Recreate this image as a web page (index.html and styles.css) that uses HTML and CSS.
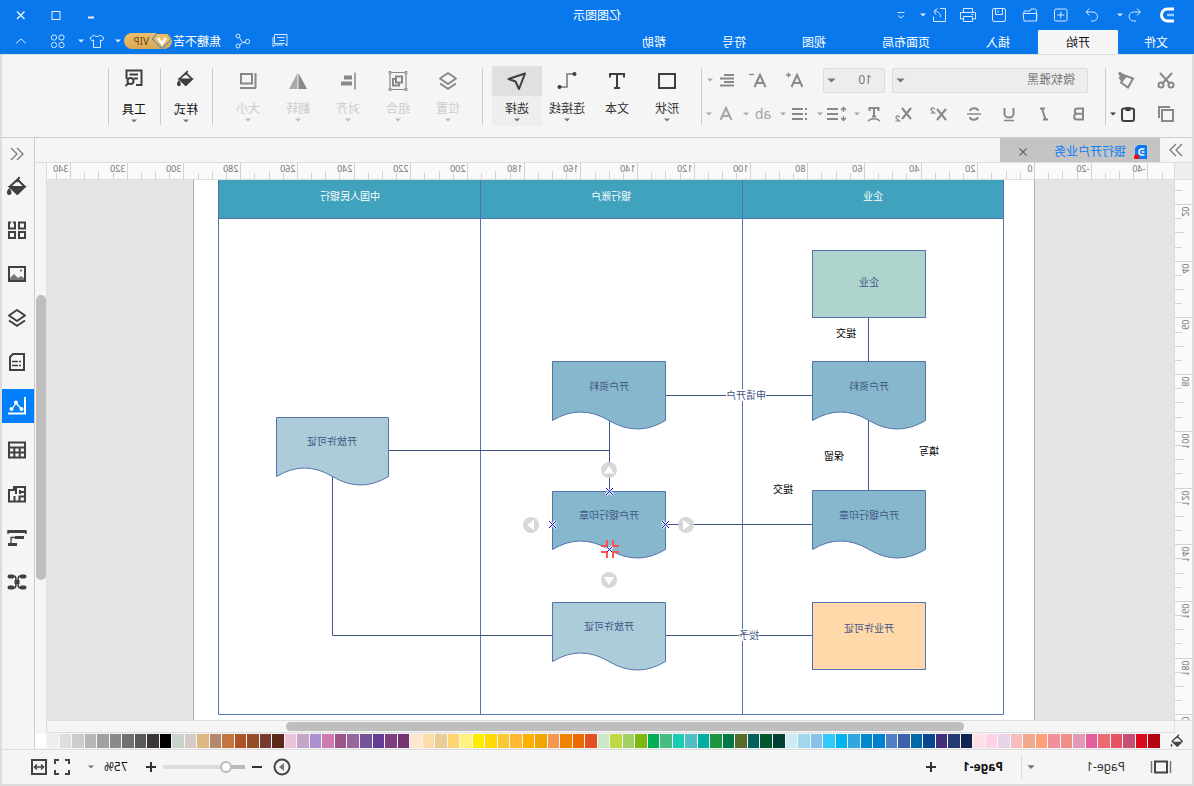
FILE: index.html
```html
<!DOCTYPE html>
<html lang="zh-CN">
<head>
<meta charset="utf-8">
<title>亿图图示</title>
<link rel="stylesheet" href="styles.css">
</head>
<body>
<svg class="defs" aria-hidden="true">
  <symbol id="bucket" viewBox="0 0 20 20"><path d="M9.500 3.500 17 10.500 9.500 17.500 2.500 10.500Z" fill="none" stroke="currentColor" stroke-width="2" stroke-linejoin="round"/><path d="M2.500 11h14.500l-7.200 6.800Z" fill="currentColor"/><path d="M7.500 1l3 5" stroke="currentColor" stroke-width="2"/><path d="M17.800 13.500c2 2.500 1.500 4.500 0 4.500s-2-2 0-4.500Z" fill="currentColor"/></symbol>
  <symbol id="layers" viewBox="0 0 20 20"><path d="M10 2 18 7.500 10 13 2 7.500Z" fill="none" stroke="currentColor" stroke-width="2" stroke-linejoin="round"/><path d="M2 12.500 10 17.800l8-5.300" fill="none" stroke="currentColor" stroke-width="2"/></symbol>
  <symbol id="caret" viewBox="0 0 8 8"><path d="M1 2.500h6L4 5.500Z" fill="currentColor"/></symbol>
  <symbol id="more" viewBox="0 0 16 16"><path d="M2 2l6 6-6 6M8 2l6 6-6 6" fill="none" stroke="currentColor" stroke-width="1.300"/></symbol>
</svg>
<div class="app">
  <header class="titlebar">
    <div class="title-row">
      <div class="quick">
        <svg class="logo" viewBox="0 0 16 16"><path d="M1 2h6.500a6 6 0 0 1 0 12H1" fill="none" stroke="#fff" stroke-width="3"/><path d="M1 8h7" stroke="#9fcbff" stroke-width="2.400"/></svg>
        <button class="q q-first" aria-label="撤销"><svg class="ic" viewBox="0 0 16 16"><path d="M6 1.500 2.500 5 6 8.500M3 5h6.500a4.500 4.500 0 0 1 0 9H7" /></svg></button><svg class="caret"><use href="#caret"/></svg>
        <button class="q q-redo" aria-label="重做"><svg class="ic" viewBox="0 0 16 16"><path d="M10.500 1.500 14 5l-3.500 3.500M13.500 5H7a4.500 4.500 0 0 0 0 9h2"/></svg></button>
        <button class="q" aria-label="新建"><svg class="ic" viewBox="0 0 16 16"><rect x="2" y="2" width="12.500" height="12" rx="1.500"/><path d="M8.200 4.500v7M4.700 8h7"/></svg></button>
        <button class="q" aria-label="打开"><svg class="ic" viewBox="0 0 16 16"><path d="M1.500 14V3.500l1-1.500H7l1 2h6v2.500M1.500 14l-.500-7.500h14L14 14Z"/></svg></button>
        <button class="q" aria-label="保存"><svg class="ic" viewBox="0 0 16 16"><rect x="1.500" y="1.500" width="13" height="13" rx="1.500"/><path d="M4.500 1.500v6h7v-6M9 3.500v2"/></svg></button>
        <button class="q" aria-label="打印"><svg class="ic" viewBox="0 0 16 16"><path d="M3.500 5.500V1.500h9v4M3.500 12H.500V5.500h15V12h-3"/><path d="M3.500 9.500h9v5h-9ZM2.500 7.500h2"/></svg></button>
        <button class="q q-narrow" aria-label="导出"><svg class="ic" viewBox="0 0 16 16"><path d="M8 1.500H2.500v13h12v-5"/><path d="M7.500 10c0-4 3-6 6-6M10.500 1.500 14 4l-2 3.500"/></svg></button><svg class="caret"><use href="#caret"/></svg>
        <button class="q q-custom" aria-label="自定义"><svg class="ic" viewBox="0 0 16 16"><path d="M4.500 5.500h7M5 8.500 8 11l3-2.500"/></svg></button>
      </div>
      <h1 class="title">亿图图示</h1>
      <div class="window-buttons">
        <button aria-label="最小化"><svg class="ic" viewBox="0 0 16 16"><path d="M5 10.500h6" stroke-width="2"/></svg></button>
        <button aria-label="最大化"><svg class="ic" viewBox="0 0 16 16"><rect x="4" y="4.500" width="8" height="8"/></svg></button>
        <button aria-label="关闭"><svg class="ic" viewBox="0 0 16 16"><path d="M4.500 4.500l7.500 7.500M12 4.500 4.500 12" stroke-width="1.400"/></svg></button>
      </div>
    </div>
    <div class="tab-row">
      <nav class="tabs">
        <button class="tab file">文件</button><button class="tab active">开始</button><button class="tab">插入</button><button class="tab">页面布局</button><button class="tab">视图</button><button class="tab">符号</button><button class="tab">帮助</button>
      </nav>
      <div class="account">
        <button class="a-msg" aria-label="消息"><svg class="ic" viewBox="0 0 16 16"><path d="M1 1.500h12.500v9H3.500L1 13ZM3.500 4.500h7.500M3.500 7.500h5M15 4v9.500l-2-1.500H5"/></svg></button>
        <button class="a-share" aria-label="分享"><svg class="ic" viewBox="0 0 16 16"><circle cx="3.500" cy="8.500" r="2.200"/><circle cx="13" cy="3" r="2"/><circle cx="13" cy="13" r="2"/><path d="M5.500 9.500c3 .500 4-1 5.800-4.800M5.500 9c2.500 0 4 1.500 5.800 3"/></svg></button>
        <span class="user">焦糖不苦</span>
        <span class="vip"><svg class="gem" viewBox="0 0 20 16"><path d="M4.500.500h11L19.500 6 10 15.500.500 6Z" fill="#eebc66" stroke="#0a78ed"/><path d="M6 5l4 5.500L14 5" fill="none" stroke="#fff" stroke-width="2.500"/></svg>VIP</span>
        <svg class="caret c-user"><use href="#caret"/></svg>
        <button class="a-shirt" aria-label="主题"><svg class="ic" viewBox="0 0 16 16"><path d="M5 2c1 2 5 2 6 0l4 3-2 3-1.500-1v7.500h-7V7L3 8 1 5Z"/></svg></button>
        <svg class="caret c-shirt"><use href="#caret"/></svg>
        <button class="a-apps" aria-label="应用"><svg class="ic" viewBox="0 0 16 16"><rect x="2" y="2" width="5" height="5" rx="2"/><rect x="9.500" y="2" width="5" height="5" rx="2"/><rect x="2" y="9.500" width="5" height="5" rx="2"/><rect x="9.500" y="9.500" width="5" height="5" rx="2"/></svg></button>
        <button class="a-fold" aria-label="折叠"><svg class="ic" viewBox="0 0 16 16"><path d="M3 10.500 8 6l5 4.500"/></svg></button>
      </div>
    </div>
  </header>

  <section class="ribbon">
    <div class="clip">
      <button aria-label="剪切"><svg class="gi" viewBox="0 0 20 20"><path d="M4 3l10 11M16 3 6 14"/><circle cx="5" cy="15" r="2.500"/><circle cx="15" cy="15" r="2.500"/></svg></button>
      <button aria-label="格式刷"><svg class="gi" viewBox="0 0 20 20"><path d="M3 8.500 10 6l5 6.500-7 5Z"/><path d="M9.500 5.500 14 3l3.500 5-3 3.500Z" fill="currentColor" stroke="none"/><path d="M14 6l3-3.500" stroke-width="3"/></svg></button>
      <button aria-label="复制"><svg class="gi" viewBox="0 0 20 20"><rect x="6" y="6" width="11" height="11" transform="translate(-3 0)"/><path d="M6 3h11v11"/></svg></button>
      <div class="pair dark"><button aria-label="粘贴"><svg class="gi" viewBox="0 0 20 20"><rect x="4" y="4.500" width="12" height="12.500" rx="2"/><path d="M7.500 5h5" stroke-width="4"/></svg></button><svg class="caret"><use href="#caret"/></svg></div>
    </div>
    <i class="sep"></i>
    <div class="font">
      <div class="font-row">
        <span class="pick family"><select aria-label="字体"><option>微软雅黑</option></select><svg class="caret"><use href="#caret"/></svg></span>
        <span class="pick size"><select aria-label="字号"><option>10</option></select><svg class="caret"><use href="#caret"/></svg></span>
        <button class="w36 push" aria-label="增大字号"><svg class="gi" viewBox="0 0 20 20"><path d="M2.500 17 8 5l5.500 12M4.500 13h7"/><path d="M14 5h5M16.500 2.500v5" stroke-width="1.300"/></svg></button>
        <button class="w36" aria-label="减小字号"><svg class="gi" viewBox="0 0 20 20"><path d="M2.500 17 8 5l5.500 12M4.500 13h7"/><path d="M14 4.500h5" stroke-width="1.300"/></svg></button>
        <button class="w26" aria-label="对齐"><svg class="gi" viewBox="0 0 20 20"><path d="M3 5h10M3 8.500h14M3 12h10M3 15.500h14"/></svg></button><svg class="caret"><use href="#caret"/></svg>
      </div>
      <div class="font-row second">
        <button class="w35" aria-label="粗体"><svg class="gi" viewBox="0 0 20 20"><path d="M6 4.500h5.500a2.500 2.500 0 0 1 0 5.300H6ZM6 9.800h6a2.800 2.800 0 0 1 0 5.700H6Z"/></svg></button>
        <button class="w35" aria-label="斜体"><svg class="gi" viewBox="0 0 20 20"><path d="M9 4.500h5M6 15.500h5M12 4.500 8.500 15.500"/></svg></button>
        <button class="w35" aria-label="下划线"><svg class="gi" viewBox="0 0 20 20"><path d="M5.500 4v6a4.500 3.500 0 0 0 9 0V4"/><path d="M5 16.500h10" stroke-width="1.500"/></svg></button>
        <button class="w35" aria-label="删除线"><svg class="gi" viewBox="0 0 20 20"><path d="M3 10h14" stroke-width="1.500"/><path d="M14 7c-1-4-8-3.500-8 0M6 13c1 4 8 3.500 8 0"/></svg></button>
        <button class="w35" aria-label="上标"><svg class="gi" viewBox="0 0 20 20"><path d="M3 5l9 11M12 5 3 16"/><path d="M14.500 5.500c0-2.500 4-2 3.500.500L14.500 9h4" stroke-width="1.200"/></svg></button>
        <button class="w35" aria-label="下标"><svg class="gi" viewBox="0 0 20 20"><path d="M3 4l9 11M12 4 3 15"/><path d="M14.500 13.500c0-2.500 4-2 3.500.500l-3.500 3h4" stroke-width="1.200"/></svg></button>
        <button class="w26" aria-label="文字方向"><svg class="gi" viewBox="0 0 20 20"><path d="M5.500 7V4h9v3M10 4v9M8 12.500h4"/><path d="M4 17c3-3 9-3 12 0" stroke-width="1.500"/></svg></button><svg class="caret"><use href="#caret"/></svg>
        <button class="w26" aria-label="行距"><svg class="gi" viewBox="0 0 20 20"><path d="M9 5h11M9 10h11M9 15h11"/><path d="M3.500 3v5M3.500 12v5M1 6l2.500-2.500L6 6M1 14l2.500 2.500L6 14" stroke-width="1.500"/></svg></button><svg class="caret"><use href="#caret"/></svg>
        <button class="w26" aria-label="列表"><svg class="gi" viewBox="0 0 20 20"><path d="M3 5h2M3 10h2M3 15h2M7 5h11M7 10h11M7 15h11"/></svg></button><svg class="caret"><use href="#caret"/></svg>
        <button class="w26 letter faint">ab</button><svg class="caret"><use href="#caret"/></svg>
        <button class="w26 faint" aria-label="字体颜色"><svg class="gi" viewBox="0 0 20 20"><path d="M4.500 16 10 4l5.500 12M6.500 12h7"/></svg></button><svg class="caret"><use href="#caret"/></svg>
      </div>
    </div>
    <i class="sep"></i>
    <div class="tools dark">
      <button class="big"><span class="pic"><svg class="gi" viewBox="0 0 20 20"><rect x="2" y="3" width="16" height="14"/></svg></span><span>形状</span><svg class="caret"><use href="#caret"/></svg></button>
      <button class="big"><span class="pic"><svg class="gi" viewBox="0 0 20 20"><path d="M3 6.500V3h14v3.500M10 3v14M7 17h6"/></svg></span><span>文本</span></button>
      <button class="big"><span class="pic"><svg class="gi" viewBox="0 0 20 20"><path d="M3 3h7v13h7" stroke="#777" stroke-width="1.500"/><circle cx="2.500" cy="3" r="2" fill="currentColor" stroke="none"/><circle cx="17.500" cy="16" r="2" fill="currentColor" stroke="none"/></svg></span><span>连接线</span><svg class="caret"><use href="#caret"/></svg></button>
      <button class="big selected"><span class="pic"><svg class="gi" viewBox="0 0 20 20"><path d="M2 2.500 18.500 8 11.500 10.500 8 18Z" stroke-linejoin="round"/></svg></span><span>选择</span><svg class="caret"><use href="#caret"/></svg></button>
    </div>
    <i class="sep"></i>
    <div class="tools disabled">
      <button class="big"><span class="pic"><svg class="gi"><use href="#layers"/></svg></span><span>位置</span><svg class="caret"><use href="#caret"/></svg></button>
      <button class="big"><span class="pic"><svg class="gi" viewBox="0 0 20 20"><path d="M2 1.500h16v17H2Z" stroke-width="1.200"/><path d="M6 5.500h6v6H6ZM9 12v2.500h6V8h-2"/><path d="M1 .500h2v2H1ZM17 .500h2v2h-2ZM1 17.500h2v2H1ZM17 17.500h2v2h-2Z" fill="#f5f5f5" stroke-width="1"/></svg></span><span>组合</span><svg class="caret"><use href="#caret"/></svg></button>
      <button class="big"><span class="pic"><svg class="gi" viewBox="0 0 20 20"><path d="M3 1.500v17" stroke-width="1.500"/><path d="M6 6.500h8M6 12.500h11" stroke-width="4"/></svg></span><span>对齐</span><svg class="caret"><use href="#caret"/></svg></button>
      <button class="big"><span class="pic"><svg class="gi" viewBox="0 0 20 20"><path d="M9.500 2v16H1Z" fill="currentColor" stroke="none"/><path d="M10.500 2v16h8.500Z" fill="#aaa" stroke="none"/></svg></span><span>翻转</span><svg class="caret"><use href="#caret"/></svg></button>
      <button class="big"><span class="pic"><svg class="gi" viewBox="0 0 20 20"><rect x="6" y="3" width="11" height="9.500"/><path d="M2.500 2v15M2 17h16"/></svg></span><span>大小</span><svg class="caret"><use href="#caret"/></svg></button>
    </div>
    <i class="sep"></i>
    <div class="tools dark tall"><button class="big"><span class="pic"><svg class="gi sm"><use href="#bucket"/></svg></span><span>样式</span><svg class="caret"><use href="#caret"/></svg></button></div>
    <i class="sep"></i>
    <div class="tools dark tall"><button class="big"><span class="pic"><svg class="gi" viewBox="0 0 20 20"><path d="M8 17H2.500V2.500h15V11M6 6.500h8.500M6 10.500h4"/><circle cx="13.500" cy="13" r="3"/><path d="M15.500 15l3 3"/></svg></span><span>工具</span><svg class="caret"><use href="#caret"/></svg></button></div>
    <i class="sep"></i>
  </section>

  <div class="work">
    <main class="main">
      <div class="docs">
        <button class="expand" aria-label="展开"><svg class="more"><use href="#more"/></svg></button>
        <div class="doc">
          <svg class="doc-icon" viewBox="0 0 14 14"><path d="M2 0h8l3 3v11H1V1Z" fill="#0a78f5"/><path d="M3.500 4H6a3 3 0 0 1 0 6H3.500M3.500 7h3" fill="none" stroke="#fff" stroke-width="1.500"/><circle cx="11.500" cy="12" r="2.500" fill="#f00"/></svg>
          <span class="doc-name">银行开户业务</span>
          <button aria-label="关闭标签"><svg class="x" viewBox="0 0 10 10"><path d="M1.500 1.500l7 7M8.500 1.500l-7 7" stroke="#666" stroke-width="1.200"/></svg></button>
        </div>
      </div>
      <div class="board">
        <div class="corner"></div>
        <svg class="ruler-x" id="ruler-x"></svg>
        <div class="track-y"><div class="thumb-y"></div></div>
        <svg class="ruler-y" id="ruler-y"></svg>
        <svg class="canvas">
          <g transform="translate(-20 -180)">
            <rect x="159.500" y="170" width="841" height="560" fill="#fff" stroke="#b0b0b0"/>
            <rect x="190.500" y="160" width="785" height="58.500" fill="#40a2bd"/>
            <g fill="none" stroke="#5473ad"><path d="M190.500 160v554.500h785V160M190.500 218.500h785M451.500 180v534M713.500 180v534"/></g>
            <g class="links"><path d="M325.500 318v43M325.500 420v71M382 395.500h146M584.500 420v72M584.500 450.500H805M382 524.500h146M382 635.500h146M642 635.500h219.500V476"/></g>
            <g class="shapes">
              <rect x="268.500" y="250.500" width="113" height="67" fill="#aed3cc"/>
              <rect x="268.500" y="602.500" width="113" height="67" fill="#ffd9aa"/>
              <path d="M268.500 361.500h113v59q-28-17-56.500 0t-56.500 0Z" fill="#87b7cc"/>
              <path d="M268.500 490.500h113v59q-28-17-56.500 0t-56.500 0Z" fill="#87b7cc"/>
              <path d="M528.500 361.500h113v59q-28-17-56.500 0t-56.500 0Z" fill="#87b7cc"/>
              <path d="M528.500 491.500h113v58q-28-17-56.500 0t-56.500 0Z" fill="#87b7cc"/>
              <path d="M528.500 602.500h113v59q-28-17-56.500 0t-56.500 0Z" fill="#adccda"/>
              <path d="M805.500 417.500h112v59q-28-17-56 0t-56 0Z" fill="#adccda"/>
            </g>
            <path d="M428 389h40v12h-40ZM435 629h20v12h-20Z" fill="#fff"/>
            <g class="t head"><text x="321" y="200">企业</text><text x="583" y="200">银行账户</text><text x="844" y="200">中国人民银行</text></g>
            <g class="t"><text x="325" y="286">企业</text><text x="325" y="390">开户资料</text><text x="325" y="519">开户银行印章</text><text x="325" y="632">开业许可证</text><text x="585" y="390">开户资料</text><text x="585" y="519">开户银行印章</text><text x="585" y="630">开放许可证</text><text x="862" y="445">开放许可证</text><text x="448" y="399">申请开户</text><text x="445" y="639">授予</text></g>
            <g class="t black"><text x="348" y="337">提交</text><text x="265" y="455">填写</text><text x="360" y="460">保留</text><text x="411" y="493">提交</text></g>
            <g fill="#d4d4d4" fill-opacity=".9"><circle cx="585" cy="470" r="8"/><circle cx="508" cy="525" r="8"/><circle cx="663" cy="525" r="8"/><circle cx="585" cy="580" r="8"/></g>
            <path d="M580 473.500h10l-5-8ZM511 520v10l-7-5ZM660 520v10l7-5ZM580 577h10l-5 8Z" fill="#fff"/>
            <g stroke="#fff" stroke-opacity=".8" stroke-width="3"><path d="M581 488l7 7M588 488l-7 7M525 521l7 7M532 521l-7 7M638 521l7 7M645 521l-7 7M581 546l7 7M588 546l-7 7"/></g>
            <path d="M587 540v6h6M581 540v6h-6M575 552h6v6M593 552h-6v6" fill="none" stroke="#ff4f4f" stroke-width="2"/>
            <path d="M581 488l7 7M588 488l-7 7M638 521l7 7M645 521l-7 7M525 521l7 7M532 521l-7 7M582 547l5 5M587 547l-5 5" stroke="#1212d8"/>
          </g>
        </svg>
        <div class="foot-corner"></div>
        <div class="track-x"><div class="thumb-x"></div></div>
      </div>
      <div class="palette">
        <button class="fill" aria-label="填充"><svg class="fill-icon"><use href="#bucket"/></svg></button>
        <div class="swatches" id="swatches"></div>
      </div>
    </main>
    <aside class="side">
      <button class="side-fold" aria-label="收起"><svg class="more back"><use href="#more"/></svg></button>
      <button aria-label="填充"><svg class="gi"><use href="#bucket"/></svg></button>
      <button aria-label="符号库"><svg class="gi" viewBox="0 0 20 20"><path d="M2 2.500h6v6H2ZM12 2.500h6v6h-6ZM2 12h6v6H2ZM12 12h6v6h-6Z"/><path d="M14 1.500h2v3h-2" fill="#f5f5f5" stroke="none"/></svg></button>
      <button aria-label="图片"><svg class="gi" viewBox="0 0 20 20"><rect x="2" y="3" width="16" height="14"/><path d="M3 16v-2l3-2 3 2 4-4 4 4v2Z" fill="#777" stroke="none"/><path d="M5 6.500h2" stroke="#777"/></svg></button>
      <button aria-label="图层"><svg class="gi"><use href="#layers"/></svg></button>
      <button aria-label="页面"><svg class="gi" viewBox="0 0 20 20"><path d="M3 2h11l3 3v13H3Z"/><path d="M6 9.500h2M9 9.500h6M6 13.500h2M9 13.500h6" stroke-width="1.500"/></svg></button>
      <button class="on" aria-label="图表"><svg class="gi" viewBox="0 0 20 20"><path d="M2 1v16.500h17"/><path d="M5.500 13 11 7l4 6" stroke-width="1.300"/><circle cx="5.500" cy="13" r="2" fill="currentColor" stroke="none"/><circle cx="11" cy="6.500" r="2" fill="currentColor" stroke="none"/><circle cx="15.500" cy="13" r="2" fill="currentColor" stroke="none"/></svg></button>
      <button aria-label="表格"><svg class="gi" viewBox="0 0 20 20"><rect x="2" y="2.500" width="16" height="15"/><path d="M2 7.500h16M2 12.500h16M7.300 7.500v10M12.700 7.500v10"/></svg></button>
      <button aria-label="户型"><svg class="gi" viewBox="0 0 20 20"><path d="M2 3h11v3h5v11.500H2ZM2 8h5M2 12.500h5.500v5M11 3v7M12.500 12v5.500M7 6v4"/></svg></button>
      <button aria-label="甘特图"><svg class="gi" viewBox="0 0 20 20"><path d="M1 6V3h18v3" stroke-width="1.500"/><path d="M1 3.500h18M3 9.500h9M10 16.500h9" stroke-width="3"/><path d="M11 9.500h5v6" stroke-width="1.300"/></svg></button>
      <button aria-label="思维导图"><svg class="gi" viewBox="0 0 20 20"><path d="M5 4h2c2 0 2 2 2 6s0 6-2 6H5M15 4h-2c-2 0-2 2-2 6s0 6 2 6h2" stroke-width="1.500"/><path d="M2.500 4.500h3M14.500 4.500h3M2.500 15.500h3M14.500 15.500h3" stroke-width="4" stroke-linecap="round"/><path d="M7.500 10h5" stroke-width="4"/></svg></button>
    </aside>
  </div>

  <footer class="status">
    <button class="pages" aria-label="页面视图"><svg viewBox="0 0 22 14"><path d="M1.500 1v12M20.500 1v12" stroke="#777" stroke-width="1.500"/><rect x="5" y="1.500" width="12" height="11" fill="none" stroke="#444" stroke-width="2"/></svg></button>
    <button class="page-pick"><span>Page-1</span><svg class="caret"><use href="#caret"/></svg></button>
    <button class="page-tab">Page-1</button>
    <button class="add" aria-label="添加页面"><svg viewBox="0 0 12 12"><path d="M1 6h10M6 1v10" stroke="#333" stroke-width="2"/></svg></button>
    <div class="zoom">
      <button class="z-play" aria-label="播放"><svg viewBox="0 0 18 18"><circle cx="9" cy="9" r="7.500" fill="none" stroke="#444" stroke-width="2"/><path d="M7 5l5 4-5 4Z" fill="#777"/></svg></button>
      <button class="z-btn" aria-label="缩小"><svg viewBox="0 0 12 12"><path d="M1 6h10" stroke="#333" stroke-width="2"/></svg></button>
      <input type="range" min="0" max="100" value="18" aria-label="缩放">
      <button class="z-btn z-plus" aria-label="放大"><svg viewBox="0 0 12 12"><path d="M1 6h10M6 1v10" stroke="#333" stroke-width="2"/></svg></button>
      <button class="percent"><span>75%</span><svg class="caret"><use href="#caret"/></svg></button>
      <button class="z-fit" aria-label="全屏"><svg viewBox="0 0 18 18"><path d="M2 6V2h4M12 2h4v4M16 12v4h-4M6 16H2v-4" fill="none" stroke="#444" stroke-width="2"/></svg></button>
      <button class="z-fit" aria-label="适应宽度"><svg viewBox="0 0 18 18"><rect x="2" y="2" width="14" height="14" fill="none" stroke="#444" stroke-width="2"/><path d="M4.500 9h9M7 6.500 4.500 9 7 11.500M11 6.500 13.500 9 11 11.500" fill="none" stroke="#444" stroke-width="1.500"/></svg></button>
    </div>
  </footer>
</div>
<script src="app.js"></script>
</body>
</html>
```

FILE: styles.css
```css
* { box-sizing: border-box; }
body { margin: 0; background: #ddd; font: 12px/16px "Noto Sans", "Noto Sans CJK SC", sans-serif; color: #111; }
button { border: 0; padding: 0; margin: 0; background: none; color: inherit; font: inherit; display: flex; align-items: center; justify-content: center; }
svg { display: block; flex: none; }
.defs { position: absolute; width: 0; height: 0; }

/* The whole window is shown as a mirror image. */
.app { display: flex; flex-direction: column; height: 100vh; overflow: hidden; transform: scaleX(-1); }

.titlebar { background: #0a78ed; color: #fff; }
.title-row { display: grid; grid-template-columns: 1fr auto 1fr; align-items: center; height: 30px; }
.quick { display: flex; align-items: center; color: #d6e9ff; }
.logo { width: 16px; height: 16px; margin: 0 13px 0 19px; }
.ic { width: 16px; height: 16px; fill: none; stroke: currentColor; stroke-width: 1; }
.caret { width: 8px; height: 8px; }
.q { width: 31px; height: 28px; }
.q-first { width: 22px; }
.q-redo { margin-left: 8px; }
.q-narrow { width: 26px; }
.q-custom { width: 20px; margin-left: 8px; }
.title { margin: 0; padding-top: 2px; font-size: 12px; line-height: 16px; font-weight: 400; }
.window-buttons { display: flex; justify-content: flex-end; gap: 5px; padding-right: 6px; color: #e8f2ff; }
.window-buttons button { width: 30px; height: 28px; }
.tab-row { display: flex; justify-content: space-between; height: 24px; }
.tabs { display: flex; }
.tab { padding: 2px 28px 0; height: 24px; white-space: nowrap; }
.tab.file { padding: 2px 26px 0; }
.tab.active { background: #f5f5f5; color: #111; border-radius: 1px 1px 0 0; }
.account { display: flex; align-items: center; height: 22px; padding-right: 6px; color: #d6e9ff; }
.a-msg { width: 20px; margin-right: 17px; }
.a-share { width: 20px; margin-right: 12px; }
.user { color: #fff; margin-right: 1px; padding-top: 1px; }
.vip { display: flex; align-items: center; width: 48px; height: 16px; margin-right: 2px; border-radius: 8px; background: linear-gradient(#edc06d, #d9a853); color: #6b4511; font-size: 10px; }
.gem { width: 20px; height: 16px; margin-right: 3px; }
.c-user { margin-right: 7px; }
.a-shirt { width: 20px; margin-right: 2px; }
.c-shirt { margin-right: 4px; }
.a-apps { width: 30px; margin-right: 7px; }
.a-fold { width: 30px; }

.ribbon { display: flex; align-items: center; height: 84px; background: #f5f5f5; border: solid #ddd; border-width: 1px 2px; border-bottom-color: #ccc; color: #888; }
.sep { width: 1px; height: 57px; background: #ccc; flex: none; }
.gi { width: 20px; height: 20px; fill: none; stroke: currentColor; stroke-width: 2; }
.gi.sm { width: 17px; height: 17px; }
.dark { color: #3f3f3f; }
.clip { display: grid; grid-template-columns: 40px 40px; grid-template-rows: 34px 34px; margin: 2px 0 0 6px; }
.pair { display: flex; align-items: center; padding-left: 8px; gap: 1px; }
.font { width: 403px; margin-top: 2px; padding-left: 8px; }
.font-row { display: flex; align-items: center; height: 34px; padding-left: 9px; }
.font-row.second { padding-left: 0; }
.font-row .caret { margin-right: 3px; color: #aaa; }
.pick { position: relative; margin-right: 7px; }
.pick select { display: block; appearance: none; width: 100%; height: 25px; border: 1px solid #dcdcdf; border-radius: 2px; background: #ededed; color: #777; font: inherit; padding: 0 12px; }
.pick .caret { position: absolute; right: 3px; top: 7px; width: 11px; height: 11px; margin: 0; color: #777; }
.family { width: 196px; }
.size { width: 62px; }
.push { margin-left: 2px; }
.w36 { width: 37px; }
.w35 { width: 35px; }
.w26 { width: 26px; }
.faint { color: #a5a5a5; }
.letter { font-size: 14px; line-height: 20px; }
.tools { display: flex; margin: 0 9px; }
.big { width: 50px; height: 60px; flex-direction: column; justify-content: flex-start; color: #333; white-space: nowrap; }
.pic { display: flex; align-items: center; justify-content: center; width: 50px; height: 30px; margin-bottom: 5px; color: #3f3f3f; }
.big .caret { color: #777; margin-top: -1px; }
.selected { background: #eee; }
.selected .pic { background: #e0e0e0; }
.disabled { margin-right: 10px; }
.disabled .big { color: #ccc; }
.disabled .pic { color: #888; }
.disabled .caret { color: #bbb; }
.tall { margin: 0 0 0 1px; }
.tall .pic { height: 24px; margin-bottom: 12px; }
.tall .big { color: #111; }

.work { display: flex; flex: 1; min-height: 0; border: solid #ddd; border-width: 0 2px; background: #f5f5f5; }
.main { display: flex; flex-direction: column; flex: 1; min-width: 0; }
.docs { display: flex; height: 24px; }
.expand { width: 32px; }
.more { width: 16px; height: 16px; color: #777; }
.back { transform: rotate(180deg); }
.doc { display: flex; align-items: center; width: 160px; padding: 3px 18px 0 12px; background: #c4c4c4; color: #0a7cf5; }
.doc-icon { width: 14px; height: 14px; margin-right: 8px; }
.doc-name { flex: 1; }
.x { width: 10px; height: 10px; }
.board { display: grid; grid-template-columns: 18px minmax(0, 1fr) 12px; grid-template-rows: 18px minmax(0, 1fr) 13px; flex: 1; min-height: 0; }
.corner { background: #eee; border: solid #ddd; border-width: 1px 1px 1px 0; }
.ruler-x { width: 100%; height: 18px; background: #fafafa; border: solid #ddd; border-width: 1px 0; }
.ruler-y { width: 18px; height: 100%; background: #fafafa; border-right: 1px solid #ddd; }
.ruler-x text, .ruler-y text { font-size: 9px; fill: #777; }
.ruler-x path, .ruler-y path { stroke: #d2d2d2; }
.canvas { width: 100%; height: 100%; background: #e5e5e5; }
.track-y { grid-column: 3; grid-row: 1 / 4; border: solid #ddd; border-width: 1px 0 0 1px; padding: 132px 0 0; }
.thumb-y { width: 10px; height: 285px; border-radius: 5px; background: #bebebe; }
.foot-corner { border-right: 1px solid #ddd; border-top: 1px solid #ddd; }
.track-x { border: solid #ddd; border-width: 1px 0; padding: 1px 239px 0 210px; }
.thumb-x { height: 9px; border-radius: 5px; background: #bebebe; }
.links { fill: none; stroke: #3f5684; }
.shapes { stroke: #5473ad; }
.t { font-size: 10px; text-anchor: middle; fill: #3f5684; }
.head { fill: #fff; }
.black { fill: #000; }
.palette { display: flex; height: 16px; padding: 1px 0; }
.fill { width: 32px; padding-right: 2px; color: #444; }
.fill-icon { width: 14px; height: 14px; }
.swatches { display: flex; flex: 1; gap: 1px; }
.swatches button { flex: 1; height: 14px; }
.side { width: 33px; border-left: 1px solid #ccc; color: #404040; }
.side button { width: 32px; height: 34px; margin-bottom: 10px; padding-left: 2px; }
.side .side-fold { height: 31px; margin-bottom: 0; }
.side .on { background: #007fff; color: #fff; }

.status { display: flex; align-items: center; height: 37px; background: #f5f5f5; border: 2px solid #ddd; border-top-width: 1px; white-space: nowrap; }
.pages svg { width: 22px; height: 14px; }
.pages { margin: 0 25px 0 20px; }
.page-pick { width: 104px; height: 24px; justify-content: space-between; padding-right: 4px; border-right: 1px solid #ddd; color: #333; }
.page-pick .caret { width: 10px; height: 10px; color: #777; }
.page-tab { margin: 0 26px 0 18px; font-weight: 700; }
.add svg, .z-btn svg { width: 12px; height: 12px; }
.zoom { display: flex; align-items: center; margin-left: auto; padding-right: 28px; }
.zoom svg { flex: none; }
.z-play svg, .z-fit svg { width: 18px; height: 18px; }
.z-btn { margin: 0 6px 0 10px; }
.zoom input { appearance: none; width: 82px; height: 12px; margin: 0; background: linear-gradient(90deg, #bbb 20%, #ddd 20%) center / 100% 4px no-repeat; }
.zoom input::-webkit-slider-thumb { appearance: none; width: 12px; height: 12px; border: 2px solid #bbb; border-radius: 50%; background: #fff; }
.z-plus { margin: 0 17px 0 6px; }
.percent { gap: 9px; margin-right: 16px; }
.percent .caret { color: #777; }
.z-fit + .z-fit { margin-left: 5px; }
```

FILE: app.js
```js
const NS = "http://www.w3.org/2000/svg";
const STEP = 56.7;

function node(parent, name, attrs, text) {
  const el = document.createElementNS(NS, name);
  for (const key in attrs) el.setAttribute(key, attrs[key]);
  if (text !== undefined) el.textContent = text;
  parent.appendChild(el);
}

const tickLengths = [17, 7, 9, 7];

function drawRulerX(svg) {
  const width = svg.getBoundingClientRect().width;
  let d = "";
  for (let i = -9; ; i++) {
    const x = Math.round(139 + i * STEP / 4) + 0.5;
    if (x > width) break;
    const kind = ((i % 4) + 4) % 4;
    d += `M${x} ${17 - tickLengths[kind]}V17`;
    if (kind === 0 && x + 20 < width) node(svg, "text", { x: x + 2, y: 9 }, i * 5);
  }
  node(svg, "path", { d });
}

function drawRulerY(svg) {
  const height = svg.getBoundingClientRect().height;
  let d = "";
  for (let i = -1; ; i++) {
    const y = Math.round(24 + i * STEP / 4) + 0.5;
    if (y > height) break;
    const kind = ((i % 4) + 4) % 4;
    d += `M${17 - tickLengths[kind]} ${y}H17`;
    if (kind === 0) node(svg, "text", { transform: `translate(10 ${y + 2}) rotate(-90)`, "text-anchor": "end" }, i * 5 + 20);
  }
  node(svg, "path", { d });
}

drawRulerX(document.getElementById("ruler-x"));
drawRulerY(document.getElementById("ruler-y"));

const colors = `b50514 d90b1c c74f73 e75364 eb6b70 e55d9d e099b7 ef8f88 f18f9a ff9f78 f0a98e f6bebb ead4e9 ffd3e5 ffe0e5
0f2451 233a73 422e7a 08478e 0169a8 3c61ac 5181c4 0080d0 008acd 2fa8e0 00b2ee 2ecbfb 8ac1ea 9fd8ed cdebf6
004032 00572d 00615d 566b2c 007946 1d963f 00ada0 50bec3 19ccb3 48bc80 00ae53 7db811 a3d064 bfd944 cce7c8
e4501f ec6a00 f08200 f49750 f0a500 ffaf00 ffb833 fac832 ffd900 ffed00 fff280 ffd470 ebcc95 ffdda9 fde8cf
763371 7f3d82 643c94 755397 96669e 9c5589 cc7ab0 a990cf c6a5ca ecc1da
5b291a 783a30 964e28 ad5327 c1763f b4866b deb883 d5cbc6 c9d3cb
000000 3c3636 595959 707070 8a8a8a 9fa1a0 b5b7b6 cbcdcc dddddd eeeeee ffffff`.split(/\s+/);

const strip = document.getElementById("swatches");
for (const c of colors) {
  const b = document.createElement("button");
  b.style.background = "#" + c;
  b.setAttribute("aria-label", "#" + c);
  strip.appendChild(b);
}
```
